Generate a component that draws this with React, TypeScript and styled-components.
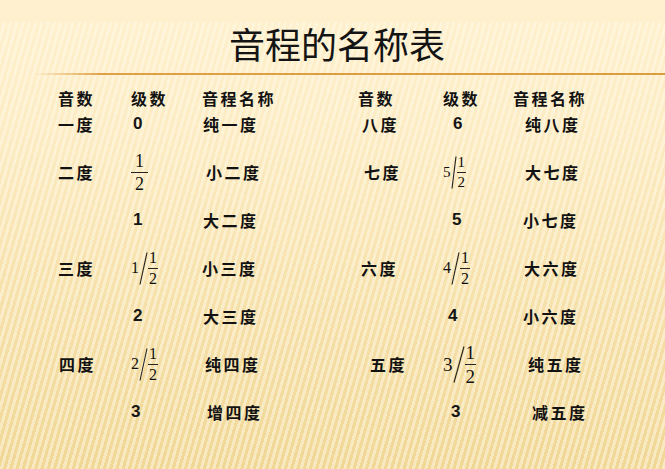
import React from 'react';
import styled, { createGlobalStyle } from 'styled-components';

const GlobalStyle = createGlobalStyle`
  html, body {
    margin: 0;
    padding: 0;
    width: 665px;
    height: 469px;
    overflow: hidden;
  }
  body {
    font-family: "Noto Sans CJK SC", "Noto Sans", sans-serif;
    color: #111;
  }
`;

const Slide = styled.div`
  width: 665px;
  height: 469px;
  overflow: hidden;
  display: flex;
  flex-direction: column;
  background:
    repeating-linear-gradient(
      106deg,
      rgba(255, 250, 232, 0) 0px,
      rgba(255, 250, 232, 0) 3px,
      rgba(255, 250, 232, 0.5) 3px,
      rgba(255, 250, 232, 0.5) 6px
    ) 0 22px / 100% 100% no-repeat,
    linear-gradient(180deg, #fff1d0 0%, #fcebc2 30%, #f6e0aa 65%, #f0d796 100%);
`;

const Title = styled.h1`
  margin: 20px 0 0;
  padding-left: 9px;
  height: 46px;
  line-height: 46px;
  text-align: center;
  font-size: 36px;
  font-weight: 400;
  color: #141414;
`;

const Rule = styled.div`
  margin: 7px 0 0 33px;
  height: 2px;
  background: linear-gradient(to right, rgba(222, 160, 70, 0), #dea046 70px, #dc9c40);
`;

const Table = styled.div`
  margin-top: 10px;
  display: flex;
  flex-direction: column;
`;

const Body = styled.div`
  margin-top: 11px;
  display: flex;
  flex-direction: column;
`;

const Row = styled.div<{ $h: number }>`
  height: ${({ $h }) => $h}px;
  display: grid;
  grid-template-columns: 73px 71px 156px 85px 69px 1fr;
  align-items: center;
  padding-left: 58px;
`;

const Cell = styled.div<{ $shift?: number }>`
  padding-left: ${({ $shift = 0 }) => $shift}px;
  display: flex;
  align-items: center;
  white-space: nowrap;
`;

const Name = styled.span`
  font-family: "Noto Sans CJK SC", sans-serif;
  font-weight: 700;
  font-size: 16px;
  letter-spacing: 2.5px;
  color: #121212;
`;

const Num = styled.span`
  font-family: "Liberation Sans", Arial, sans-serif;
  font-weight: 700;
  font-size: 17px;
  color: #151515;
`;

const Mixed = styled.span`
  display: inline-flex;
  align-items: center;
  font-family: "Liberation Serif", "Times New Roman", serif;
  color: #111;
`;

const Whole = styled.span<{ $size: number }>`
  font-size: ${({ $size }) => $size}px;
  line-height: 1;
`;

const Frac = styled.span<{ $size: number; $wide?: boolean }>`
  display: inline-flex;
  flex-direction: column;
  align-items: center;
  font-family: "Liberation Serif", "Times New Roman", serif;
  font-size: ${({ $size }) => $size}px;
  line-height: 1;
  color: #111;

  span {
    padding: 0 ${({ $wide }) => ($wide ? 4 : 1)}px;
  }
  span:first-child {
    border-bottom: 1px solid #222;
    padding-bottom: 2px;
  }
  span:last-child {
    padding-top: 2px;
  }
`;

const Slash: React.FC<{ h: number; w: number }> = ({ h, w }) => (
  <svg width={w} height={h} viewBox={`0 0 ${w} ${h}`} style={{ display: 'block' }}>
    <line x1={w - 1} y1={0.5} x2={1} y2={h - 0.5} stroke="#222" strokeWidth={1.1} />
  </svg>
);

type Grade =
  | { kind: 'num'; v: string }
  | { kind: 'half' }
  | { kind: 'mixed'; v: string; size: number; h: number; w: number };

const Half: React.FC<{ size: number; wide?: boolean }> = ({ size, wide }) => (
  <Frac $size={size} $wide={wide}>
    <span>1</span>
    <span>2</span>
  </Frac>
);

const GradeView: React.FC<{ g: Grade }> = ({ g }) => {
  if (g.kind === 'num') return <Num>{g.v}</Num>;
  if (g.kind === 'half') return <Half size={18} wide />;
  return (
    <Mixed>
      <Whole $size={g.size}>{g.v}</Whole>
      <Slash h={g.h} w={g.w} />
      <Half size={g.size} />
    </Mixed>
  );
};

interface Entry {
  deg?: string;
  degShift?: number;
  grade: Grade;
  gradeShift: number;
  name: string;
  nameShift: number;
}

const left: Entry[] = [
  { deg: '一度', grade: { kind: 'num', v: '0' }, gradeShift: 2, name: '纯一度', nameShift: 1 },
  { deg: '二度', grade: { kind: 'half' }, gradeShift: 0, name: '小二度', nameShift: 4 },
  { grade: { kind: 'num', v: '1' }, gradeShift: 2, name: '大二度', nameShift: 1 },
  { deg: '三度', grade: { kind: 'mixed', v: '1', size: 16, h: 33, w: 9 }, gradeShift: -5, name: '小三度', nameShift: 0 },
  { grade: { kind: 'num', v: '2' }, gradeShift: 2, name: '大三度', nameShift: 1 },
  { deg: '四度', degShift: 1, grade: { kind: 'mixed', v: '2', size: 16, h: 33, w: 9 }, gradeShift: -5, name: '纯四度', nameShift: 3 },
  { grade: { kind: 'num', v: '3' }, gradeShift: -3, name: '增四度', nameShift: 5 },
];

const right: Entry[] = [
  { deg: '八度', degShift: 4, grade: { kind: 'num', v: '6' }, gradeShift: 10, name: '纯八度', nameShift: 13 },
  { deg: '七度', degShift: 6, grade: { kind: 'mixed', v: '5', size: 15, h: 33, w: 6 }, gradeShift: 0, name: '大七度', nameShift: 13 },
  { grade: { kind: 'num', v: '5' }, gradeShift: 9, name: '小七度', nameShift: 11 },
  { deg: '六度', degShift: 3, grade: { kind: 'mixed', v: '4', size: 16, h: 33, w: 9 }, gradeShift: -6, name: '大六度', nameShift: 12 },
  { grade: { kind: 'num', v: '4' }, gradeShift: 5, name: '小六度', nameShift: 11 },
  { deg: '五度', degShift: 12, grade: { kind: 'mixed', v: '3', size: 19, h: 37, w: 12 }, gradeShift: -6, name: '纯五度', nameShift: 16 },
  { grade: { kind: 'num', v: '3' }, gradeShift: 8, name: '减五度', nameShift: 20 },
];

const EntryCells: React.FC<{ e: Entry }> = ({ e }) => (
  <>
    <Cell $shift={e.degShift}>{e.deg && <Name>{e.deg}</Name>}</Cell>
    <Cell $shift={e.gradeShift}>
      <GradeView g={e.grade} />
    </Cell>
    <Cell $shift={e.nameShift}>
      <Name>{e.name}</Name>
    </Cell>
  </>
);

const App: React.FC = () => (
  <>
    <GlobalStyle />
    <Slide>
      <Title>音程的名称表</Title>
      <Rule />
      <Table>
        <Row $h={26}>
          <Cell><Name>音数</Name></Cell>
          <Cell><Name>级数</Name></Cell>
          <Cell><Name>音程名称</Name></Cell>
          <Cell><Name>音数</Name></Cell>
          <Cell><Name>级数</Name></Cell>
          <Cell $shift={1}><Name>音程名称</Name></Cell>
        </Row>
        <Row $h={26}>
          <EntryCells e={left[0]} />
          <EntryCells e={right[0]} />
        </Row>
        <Body>
          {left.slice(1).map((e, i) => (
            <Row $h={48} key={i}>
              <EntryCells e={e} />
              <EntryCells e={right[i + 1]} />
            </Row>
          ))}
        </Body>
      </Table>
    </Slide>
  </>
);

export default App;
